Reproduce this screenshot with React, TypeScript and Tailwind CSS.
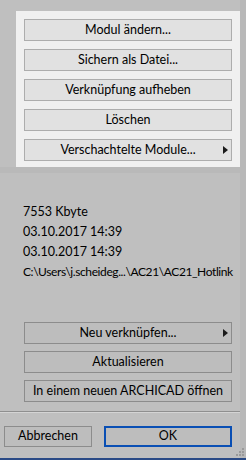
import React from "react";

const font = { fontFamily: 'Lato, "Noto Sans", sans-serif' };

function Tri() {
  return (
    <svg width="5" height="8" viewBox="0 0 5 8" className="absolute right-[3px] top-1/2 -translate-y-1/2">
      <path d="M0 0 L5 4 L0 8 Z" fill="#1a1a1a" />
    </svg>
  );
}

function PanelButton({ label, arrow }: { label: string; arrow?: boolean }) {
  return (
    <div className="relative h-[22px] w-[208px] bg-[#e1e1e1] border border-[#adadad] flex items-center justify-center text-[12.5px] text-[#000]">
      <span className="leading-none">{label}</span>
      {arrow && <Tri />}
    </div>
  );
}

function GrayButton({ label, arrow }: { label: string; arrow?: boolean }) {
  return (
    <div className="relative h-[22px] w-[208px] bg-[#bdbdbd] border border-[#8c8c8c] flex items-center justify-center text-[12.5px] text-[#000]">
      <span className="leading-none">{label}</span>
      {arrow && <Tri />}
    </div>
  );
}

export default function App() {
  return (
    <div className="w-[246px] h-[460px] bg-[#bfbfbf] flex flex-col relative overflow-hidden" style={font}>
      <div className="flex flex-1">
        <div className="w-[240px] flex flex-col">
          <div className="pt-[11px] pl-[16px]">
            <div className="w-[224px] h-[156px] bg-[#f0f0f0] pt-[8px] pl-[8px] flex flex-col gap-[8px]">
              <PanelButton label="Modul ändern..." />
              <PanelButton label="Sichern als Datei..." />
              <PanelButton label="Verknüpfung aufheben" />
              <PanelButton label="Löschen" />
              <PanelButton label="Verschachtelte Module..." arrow />
            </div>
          </div>
          <div className="h-[6px] bg-[#b9b9b9]" />
          <div className="pt-[29px] pl-[23px] flex flex-col text-[12.5px] text-[#000]">
            <div className="h-[20px] flex items-center">7553 Kbyte</div>
            <div className="h-[20px] flex items-center">03.10.2017 14:39</div>
            <div className="h-[20px] flex items-center">03.10.2017 14:39</div>
            <div className="h-[20px] flex items-center whitespace-nowrap text-[12px] tracking-[-0.4px]">C:\Users\j.scheideg...\AC21\AC21_Hotlink</div>
          </div>
          <div className="pt-[40px] pl-[24px] flex flex-col gap-[7px]">
            <GrayButton label="Neu verknüpfen..." arrow />
            <GrayButton label="Aktualisieren" />
            <GrayButton label="In einem neuen ARCHICAD öffnen" />
          </div>
          <div className="mt-[9px] h-[1px] bg-[#8f8f8f]" />
          <div className="h-[1px] bg-[#d4d4d4]" />
          <div className="pt-[13px] pl-[4px] flex gap-[12px]">
            <div className="h-[21px] w-[88px] bg-[#bdbdbd] border border-[#8c8c8c] flex items-center justify-center text-[12.5px]">
              <span className="leading-none">Abbrechen</span>
            </div>
            <div className="h-[21px] w-[128px] bg-[#bdbdbd] border-2 border-[#0a4fb4] flex items-center justify-center text-[12.5px]">
              <span className="leading-none">OK</span>
            </div>
          </div>
        </div>
        <div className="w-[6px] bg-[#b8b8b8]" />
      </div>
      <svg width="8" height="8" viewBox="0 0 8 8" className="absolute right-[2px] bottom-[4px]">
        <rect x="6" y="0" width="2" height="2" fill="#9a9a9a" />
        <rect x="3" y="3" width="2" height="2" fill="#9a9a9a" />
        <rect x="6" y="3" width="2" height="2" fill="#9a9a9a" />
        <rect x="0" y="6" width="2" height="2" fill="#9a9a9a" />
        <rect x="3" y="6" width="2" height="2" fill="#9a9a9a" />
        <rect x="6" y="6" width="2" height="2" fill="#9a9a9a" />
      </svg>
      <div className="h-[2px] bg-[#2a4a86]" />
    </div>
  );
}
